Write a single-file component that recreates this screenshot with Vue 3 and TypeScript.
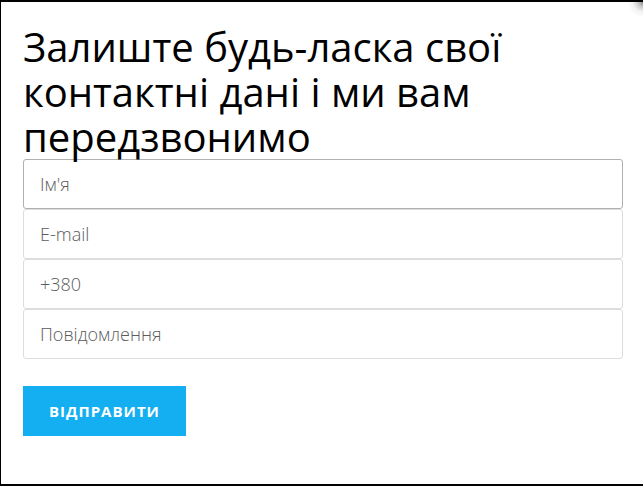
<script setup lang="ts">
import { reactive } from 'vue'

interface Field {
  id: 'name' | 'email' | 'phone' | 'message'
  type: string
  placeholder: string
}

const fields: Field[] = [
  { id: 'name', type: 'text', placeholder: "Ім'я" },
  { id: 'email', type: 'email', placeholder: 'E-mail' },
  { id: 'phone', type: 'tel', placeholder: '+380' },
  { id: 'message', type: 'text', placeholder: 'Повідомлення' },
]

const form = reactive({ name: '', email: '', phone: '', message: '' })
</script>

<template>
  <main class="popup">
    <h1 class="title">Залиште будь-ласка свої контактні дані і ми вам передзвонимо</h1>
    <form @submit.prevent>
      <input
        v-for="field in fields"
        :key="field.id"
        v-model="form[field.id]"
        class="field"
        :class="{ active: field.id === 'name' }"
        :type="field.type"
        :name="field.id"
        :placeholder="field.placeholder"
        :aria-label="field.placeholder"
      />
      <button class="submit" type="submit">Відправити</button>
    </form>
  </main>
</template>

<style>
body {
  background: #fff;
}
</style>

<style scoped>
.popup {
  box-sizing: border-box;
  min-height: 100vh;
  padding: 22px 20px 48px 22px;
  border: solid #000;
  border-width: 2px 0 2px 1px;
  background: radial-gradient(circle at 100% 0, #888 0, #ccc 5px, #f3f3f3 10px, #fff 16px);
  font-family: "Open Sans", sans-serif;
}

.title {
  margin: 0;
  color: #000;
  font-size: 40px;
  font-weight: 400;
  line-height: 45px;
}

.field {
  display: block;
  box-sizing: border-box;
  width: 100%;
  height: 50px;
  padding: 0 16px;
  border: 1px solid #ddd;
  border-radius: 3px;
  outline: none;
  background: transparent;
  color: #333;
  font-family: inherit;
  font-size: 18px;
  font-weight: 300;
}

.field::placeholder {
  color: #5c5c5c;
  opacity: 1;
}

.field.active,
.field:focus {
  border-color: #b0b0b0;
}

.submit {
  height: 50px;
  margin-top: 27px;
  padding: 0 26px;
  border: 0;
  background: #13aff0;
  color: #fff;
  font-family: inherit;
  font-size: 15px;
  font-weight: 700;
  letter-spacing: 1px;
  text-transform: uppercase;
  cursor: pointer;
}
</style>
